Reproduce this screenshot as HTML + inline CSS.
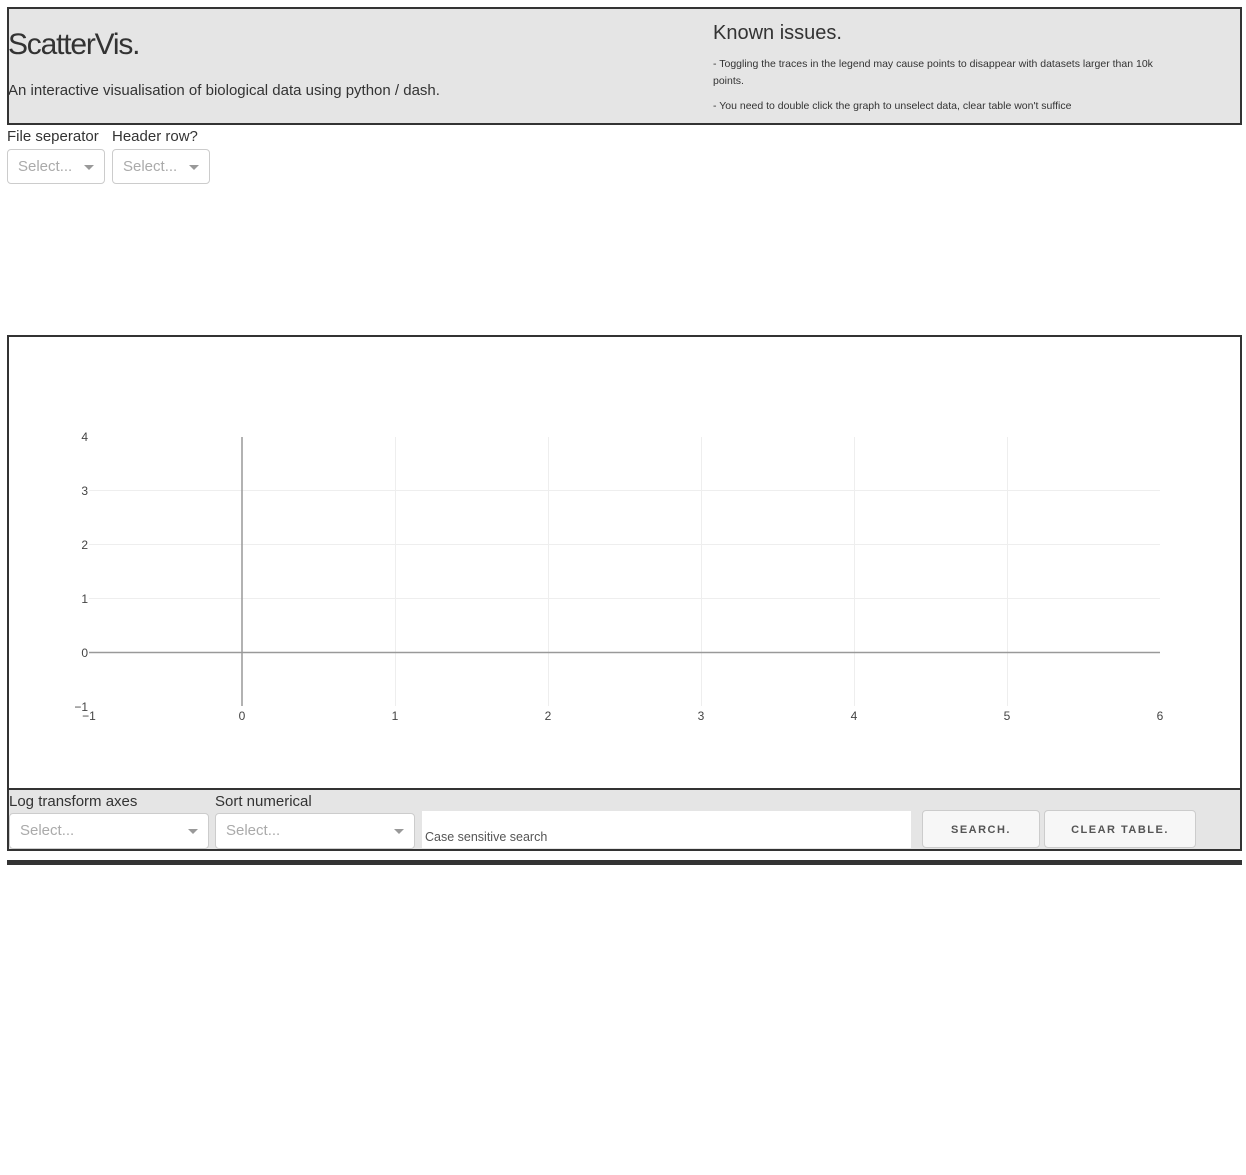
<!DOCTYPE html>
<html><head><meta charset="utf-8"><style>
*{box-sizing:border-box;margin:0;padding:0}
body{width:1246px;height:1175px;background:#fff;position:relative;font-family:"Liberation Sans",Arial,sans-serif;color:#333;overflow:hidden}
.a{position:absolute}
.box{position:absolute;border:2px solid #333}
.sel{position:absolute;background:#fff;border:1px solid #ccc;border-radius:4px;color:#aaa;font-size:15px;padding-left:10px;line-height:34px}
.sel:after{content:"";position:absolute;right:10px;top:15px;border:5px solid transparent;border-top:5px solid #999;border-bottom:0}
.btn{position:absolute;border:1px solid #ccc;border-radius:4px;background:#f7f7f7;font-size:11px;font-weight:bold;letter-spacing:1.5px;color:#555;text-align:center;line-height:38px}
</style></head><body>
<div class="box" style="left:7px;top:7px;width:1235px;height:118px;background:#e5e5e5"></div>
<div class="a" style="left:8px;top:28px;font-size:30px;letter-spacing:-1.2px;color:#333">ScatterVis.</div>
<div class="a" style="left:8px;top:82px;font-size:15px;color:#333">An interactive visualisation of biological data using python / dash.</div>
<div class="a" style="left:713px;top:22px;font-size:20px;color:#333">Known issues.</div>
<div class="a" style="left:713px;top:56px;font-size:10.5px;line-height:17px;width:460px;color:#333">- Toggling the traces in the legend may cause points to disappear with datasets larger than 10k points.</div>
<div class="a" style="left:713px;top:99px;font-size:10.5px;line-height:14px;color:#333">- You need to double click the graph to unselect data, clear table won't suffice</div>

<div class="a" style="left:7px;top:128px;font-size:15px">File seperator</div>
<div class="a" style="left:112px;top:128px;font-size:15px">Header row?</div>
<div class="sel" style="left:7px;top:149px;width:98px;height:35px">Select...</div>
<div class="sel" style="left:112px;top:149px;width:98px;height:35px">Select...</div>

<div class="box" style="left:7px;top:335px;width:1235px;height:455px;background:#fff"></div>
<svg class="a" style="left:0;top:0" width="1246" height="800" font-family="Liberation Sans, sans-serif" font-size="12" fill="#444">
<g stroke="#eee" stroke-width="1">
<line x1="89" y1="490.5" x2="1160" y2="490.5"/><line x1="89" y1="544.5" x2="1160" y2="544.5"/><line x1="89" y1="598.5" x2="1160" y2="598.5"/>
<line x1="395.5" y1="437" x2="395.5" y2="706"/><line x1="548.5" y1="437" x2="548.5" y2="706"/><line x1="701.5" y1="437" x2="701.5" y2="706"/><line x1="854.5" y1="437" x2="854.5" y2="706"/><line x1="1007.5" y1="437" x2="1007.5" y2="706"/>
</g>
<line x1="89" y1="652.5" x2="1160" y2="652.5" stroke="#999" stroke-width="1.5"/>
<line x1="242" y1="437" x2="242" y2="706" stroke="#999" stroke-width="1.5"/>
<g text-anchor="end"><text x="88" y="441">4</text><text x="88" y="495">3</text><text x="88" y="549">2</text><text x="88" y="603">1</text><text x="88" y="657">0</text><text x="88" y="711">−1</text></g>
<g text-anchor="middle"><text x="89" y="720">−1</text><text x="242" y="720">0</text><text x="395" y="720">1</text><text x="548" y="720">2</text><text x="701" y="720">3</text><text x="854" y="720">4</text><text x="1007" y="720">5</text><text x="1160" y="720">6</text></g>
</svg>

<div class="box" style="left:7px;top:788px;width:1235px;height:63px;background:#e5e5e5"></div>
<div class="a" style="left:9px;top:793px;font-size:15px">Log transform axes</div>
<div class="a" style="left:215px;top:793px;font-size:15px">Sort numerical</div>
<div class="sel" style="left:9px;top:813px;width:200px;height:36px">Select...</div>
<div class="sel" style="left:215px;top:813px;width:200px;height:36px">Select...</div>
<div class="a" style="left:422px;top:811px;width:489px;height:37px;background:#fff;font-size:12.5px;color:#555;padding:19px 0 0 3px">Case sensitive search</div>
<div class="btn" style="left:922px;top:810px;width:118px;height:38px">SEARCH.</div>
<div class="btn" style="left:1044px;top:810px;width:152px;height:38px">CLEAR TABLE.</div>
<div class="a" style="left:7px;top:860px;width:1235px;height:5px;background:#333"></div>
</body></html>
